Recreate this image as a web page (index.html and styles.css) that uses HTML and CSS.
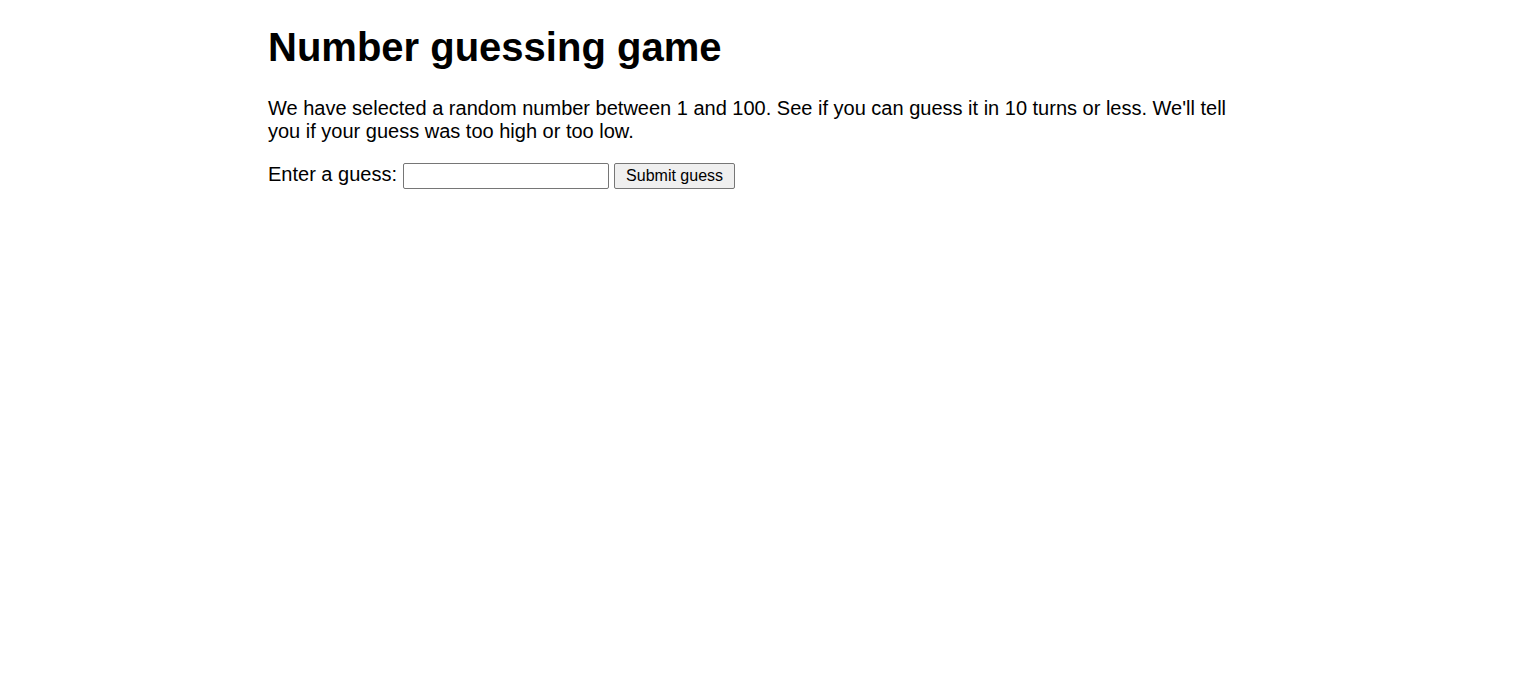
FILE: index.html
```html
<!DOCTYPE html>
<html lang="en">
<head>
<meta charset="utf-8">
<title>Number guessing game</title>
<link rel="stylesheet" href="styles.css">
</head>
<body>
<h1>Number guessing game</h1>
<p>We have selected a random number between 1 and 100. See if you can guess it in 10 turns or less. We'll tell you if your guess was too high or too low.</p>
<div class="form">
<label for="guessField">Enter a guess: </label><input type="number" id="guessField" class="guessField"> <input type="submit" value="Submit guess" class="guessSubmit">
</div>
</body>
</html>
```
FILE: styles.css
```css
html {
  font-family: "Liberation Sans", Arial, sans-serif;
  font-size: 20px;
}
body {
  width: 988px;
  margin: 0 auto;
}
h1 {
  font-size: 2em;
  margin: 25px 0 0.67em;
}
p {
  margin: 1em 0;
}
.form input {
  font-family: "Liberation Sans", Arial, sans-serif;
  font-size: 16px;
}
.guessField {
  width: 200px;
  padding: 3px 2px;
  border: 1px solid #767676;
  border-radius: 2px;
}
.guessSubmit {
  padding: 3px 11px;
  border: 1px solid #767676;
  border-radius: 2px;
  background: #efefef;
}
```
